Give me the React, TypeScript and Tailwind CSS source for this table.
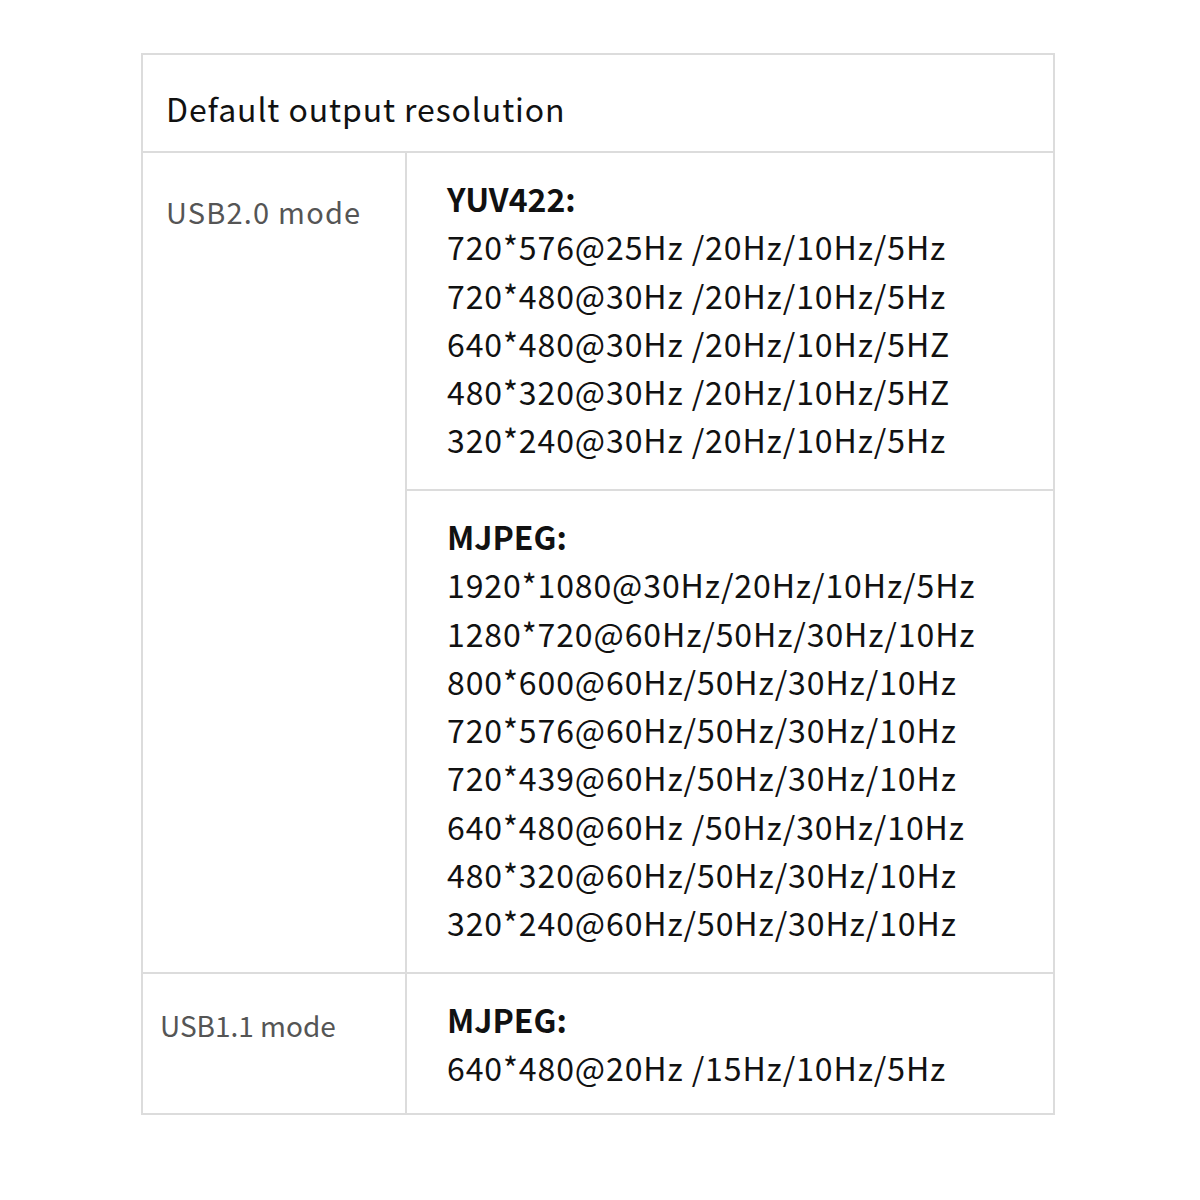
const yuv = [
  "720*576@25Hz /20Hz/10Hz/5Hz",
  "720*480@30Hz /20Hz/10Hz/5Hz",
  "640*480@30Hz /20Hz/10Hz/5HZ",
  "480*320@30Hz /20Hz/10Hz/5HZ",
  "320*240@30Hz /20Hz/10Hz/5Hz",
];

const mjpeg = [
  "1920*1080@30Hz/20Hz/10Hz/5Hz",
  "1280*720@60Hz/50Hz/30Hz/10Hz",
  "800*600@60Hz/50Hz/30Hz/10Hz",
  "720*576@60Hz/50Hz/30Hz/10Hz",
  "720*439@60Hz/50Hz/30Hz/10Hz",
  "640*480@60Hz /50Hz/30Hz/10Hz",
  "480*320@60Hz/50Hz/30Hz/10Hz",
  "320*240@60Hz/50Hz/30Hz/10Hz",
];

function Block({ title, lines }: { title: string; lines: string[] }) {
  return (
    <div className="text-[32px] leading-[48.3px] text-[#111]">
      <p className="font-bold">{title}</p>
      {lines.map((l) => (
        <p key={l} className="tracking-[0.9px]">{l}</p>
      ))}
    </div>
  );
}

export default function App() {
  return (
    <div
      className="w-[1200px] h-[1200px] bg-white pt-[53px] pl-[141px]"
      style={{ fontFamily: '"Noto Sans CJK SC", "Noto Sans", sans-serif' }}
    >
      <div className="w-[914px] border-2 border-[#dcdcdc]">
        {/* header */}
        <div className="h-[98px] flex items-center pl-[23px] border-b-2 border-[#dcdcdc]">
          <p className="text-[32px] tracking-[0.9px] text-[#111] pt-[9px]">Default output resolution</p>
        </div>

        {/* usb 2.0 */}
        <div className="flex border-b-2 border-[#dcdcdc]">
          <div className="w-[264px] shrink-0 border-r-2 border-[#dcdcdc] pl-[23px] pt-[37px]">
            <p className="text-[29px] tracking-[1.2px] text-[#555]">USB2.0 mode</p>
          </div>
          <div className="flex-1 flex flex-col">
            <div className="h-[338px] pl-[40px] pt-[21px] border-b-2 border-[#dcdcdc]">
              <Block title="YUV422:" lines={yuv} />
            </div>
            <div className="h-[481px] pl-[40px] pt-[21px]">
              <Block title="MJPEG:" lines={mjpeg} />
            </div>
          </div>
        </div>

        {/* usb 1.1 */}
        <div className="flex h-[139px]">
          <div className="w-[264px] shrink-0 border-r-2 border-[#dcdcdc] pl-[17px] pt-[30px]">
            <p className="text-[28px] text-[#555]">USB1.1 mode</p>
          </div>
          <div className="flex-1 pl-[40px] pt-[21px]">
            <Block title="MJPEG:" lines={["640*480@20Hz /15Hz/10Hz/5Hz"]} />
          </div>
        </div>
      </div>
    </div>
  );
}
